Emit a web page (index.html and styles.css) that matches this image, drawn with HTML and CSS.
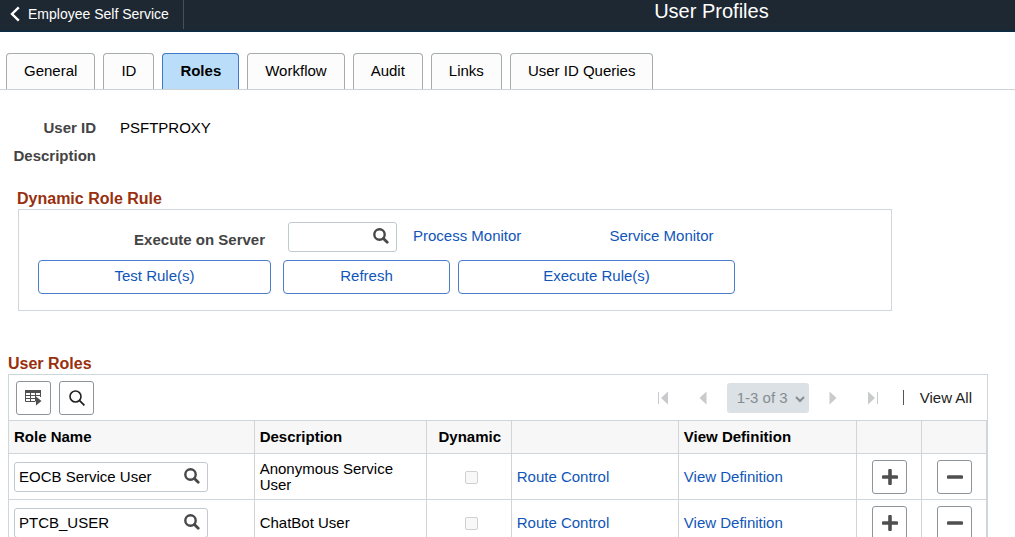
FILE: index.html
```html
<!DOCTYPE html>
<html lang="en">
<head>
<meta charset="utf-8">
<meta name="viewport" content="width=device-width, initial-scale=1">
<title>User Profiles</title>
<link rel="stylesheet" href="styles.css">
</head>
<body>
<svg class="symbols" aria-hidden="true">
  <symbol id="lookup" viewBox="0 0 16 16">
    <circle cx="6.5" cy="6.5" r="5.2" fill="none" stroke="currentColor" stroke-width="2.4"/>
    <path d="M10.4 10.4 14.2 14.2" stroke="currentColor" stroke-width="2.8" stroke-linecap="round"/>
  </symbol>
  <symbol id="plus" viewBox="0 0 16 16">
    <path d="M1.5 8h13M8 1.500v13" stroke="currentColor" stroke-width="3.6" stroke-linecap="round"/>
  </symbol>
  <symbol id="minus" viewBox="0 0 16 16">
    <path d="M1.5 8h13" stroke="currentColor" stroke-width="3.6" stroke-linecap="round"/>
  </symbol>
</svg>

<header class="banner">
  <a class="back" href="#">
    <svg class="back-icon" viewBox="0 0 10 16" aria-hidden="true"><path d="M8.8 1.3 2 8l6.8 6.7" fill="none" stroke="currentColor" stroke-width="2.4"/></svg>
    Employee Self Service
  </a>
  <h1 class="title">User Profiles</h1>
</header>

<nav class="tabs" aria-label="Profile pages">
  <a class="tab" href="#">General</a>
  <a class="tab" href="#">ID</a>
  <a class="tab tab-current" href="#" aria-current="page">Roles</a>
  <a class="tab" href="#">Workflow</a>
  <a class="tab" href="#">Audit</a>
  <a class="tab" href="#">Links</a>
  <a class="tab" href="#">User ID Queries</a>
</nav>

<main>
  <dl class="facts">
    <dt>User ID</dt><dd>PSFTPROXY</dd>
    <dt>Description</dt><dd></dd>
  </dl>

  <section class="rule">
    <h2 class="heading">Dynamic Role Rule</h2>
    <div class="rule-box">
      <div class="rule-row">
        <label class="server-label" for="server">Execute on Server</label>
        <div class="lookup lookup-server">
          <input id="server" type="text">
          <button type="button" aria-label="Look up server"><svg class="icon" aria-hidden="true"><use href="#lookup"/></svg></button>
        </div>
        <a class="process" href="#">Process Monitor</a>
        <a class="service" href="#">Service Monitor</a>
      </div>
      <div class="rule-actions">
        <button class="action" type="button">Test Rule(s)</button>
        <button class="action action-refresh" type="button">Refresh</button>
        <button class="action" type="button">Execute Rule(s)</button>
      </div>
    </div>
  </section>

  <section class="roles">
    <h2 class="heading">User Roles</h2>
    <div class="grid-box">
      <div class="toolbar">
        <button class="square" type="button" aria-label="Grid actions">
          <svg class="grid-icon" viewBox="0 0 17 17" aria-hidden="true">
            <path d="M0 1h16v3H0z" fill="currentColor"/>
            <path d="M.5 3v9.5H10M.5 6.5h15M.5 9.5H11M5.5 3v9.5M10.5 3v9.5M15.5 3v5" fill="none" stroke="currentColor"/>
            <path d="M11 7.5 16.5 12 11 16.5z" fill="currentColor"/>
          </svg>
        </button>
        <button class="square" type="button" aria-label="Find in grid">
          <svg class="find-icon" viewBox="0 0 16 16" aria-hidden="true"><circle cx="6.5" cy="6.5" r="5.5" fill="none" stroke="currentColor" stroke-width="1.6"/><path d="m10.4 10.4 5 5" stroke="currentColor" stroke-width="1.8"/></svg>
        </button>
        <div class="pager">
          <button type="button" disabled aria-label="First"><svg viewBox="0 0 12 14" aria-hidden="true"><path d="M1 1h1v12H1zM11 .5v13L4 7z" fill="currentColor"/></svg></button>
          <button type="button" disabled aria-label="Previous"><svg viewBox="0 0 12 14" aria-hidden="true"><path d="M9.5 .5v13L2.5 7z" fill="currentColor"/></svg></button>
          <div class="range">
            <select aria-label="Rows shown" disabled><option>1-3 of 3</option></select>
            <svg class="range-icon" viewBox="0 0 10 7" aria-hidden="true"><path d="m1 1 4 4 4-4" fill="none" stroke="currentColor" stroke-width="2"/></svg>
          </div>
          <button type="button" disabled aria-label="Next"><svg viewBox="0 0 12 14" aria-hidden="true"><path d="M2.5 .5v13L9.5 7z" fill="currentColor"/></svg></button>
          <button type="button" disabled aria-label="Last"><svg viewBox="0 0 12 14" aria-hidden="true"><path d="M10 1h1v12h-1zM1 .5v13L8 7z" fill="currentColor"/></svg></button>
        </div>
        <a class="view-all" href="#">View All</a>
      </div>
      <table class="grid">
        <colgroup><col class="c-name"><col class="c-desc"><col class="c-dyn"><col class="c-route"><col class="c-def"><col class="c-btn"><col class="c-btn"></colgroup>
        <thead>
          <tr><th scope="col">Role Name</th><th scope="col">Description</th><th class="mid" scope="col">Dynamic</th><th></th><th scope="col">View Definition</th><th></th><th></th></tr>
        </thead>
        <tbody>
          <tr>
            <td><div class="lookup"><input type="text" aria-label="Role name 1" value="EOCB Service User"><button type="button" aria-label="Look up role 1"><svg class="icon" aria-hidden="true"><use href="#lookup"/></svg></button></div></td>
            <td>Anonymous Service User</td>
            <td class="mid"><input class="tick" type="checkbox" disabled aria-label="Dynamic, row 1"></td>
            <td><a href="#">Route Control</a></td>
            <td><a href="#">View Definition</a></td>
            <td class="mid"><button class="square" type="button" aria-label="Add row after 1"><svg class="icon" aria-hidden="true"><use href="#plus"/></svg></button></td>
            <td class="mid"><button class="square" type="button" aria-label="Delete row 1"><svg class="icon" aria-hidden="true"><use href="#minus"/></svg></button></td>
          </tr>
          <tr>
            <td><div class="lookup"><input type="text" aria-label="Role name 2" value="PTCB_USER"><button type="button" aria-label="Look up role 2"><svg class="icon" aria-hidden="true"><use href="#lookup"/></svg></button></div></td>
            <td>ChatBot User</td>
            <td class="mid"><input class="tick" type="checkbox" disabled aria-label="Dynamic, row 2"></td>
            <td><a href="#">Route Control</a></td>
            <td><a href="#">View Definition</a></td>
            <td class="mid"><button class="square" type="button" aria-label="Add row after 2"><svg class="icon" aria-hidden="true"><use href="#plus"/></svg></button></td>
            <td class="mid"><button class="square" type="button" aria-label="Delete row 2"><svg class="icon" aria-hidden="true"><use href="#minus"/></svg></button></td>
          </tr>
        </tbody>
      </table>
    </div>
  </section>
</main>
</body>
</html>
```

FILE: styles.css
```css
* { box-sizing: border-box; }

html { scrollbar-width: none; }

body {
  margin: 0;
  background: #fff;
  color: #000;
  font: 15px/16px "Liberation Sans", Arial, sans-serif;
}

h1, h2, dl, dd { margin: 0; }
a { color: #0f56b8; text-decoration: none; }
button, input, select { font: inherit; color: inherit; margin: 0; }
button { cursor: pointer; }
svg { display: block; }

.symbols { position: absolute; width: 0; height: 0; }
.icon { width: 16px; height: 16px; }

.banner {
  display: flex;
  align-items: flex-start;
  height: 32px;
  background: #1e2832;
  border-bottom: 2px solid #0f2b42;
  color: #fff;
}
.back {
  display: flex;
  align-items: center;
  gap: 8px;
  height: 29px;
  padding: 0 14px 2px 10px;
  border-right: 1px solid #46505a;
  color: #fff;
  font-size: 14px;
  white-space: nowrap;
}
.back-icon { width: 10px; height: 16px; }
.title {
  flex: 1;
  padding-left: 224px;
  font-size: 20px;
  line-height: 22px;
  font-weight: 400;
  text-align: center;
}

.tabs {
  display: flex;
  gap: 8px;
  margin-top: 21px;
  padding: 0 6px;
  border-bottom: 1px solid #ccd2d6;
}
.tab {
  padding: 9px 17px 10px;
  border: 1px solid #a6abae;
  border-bottom: 0;
  border-radius: 4px 4px 0 0;
  background: #fcfcfc;
  color: #000;
  white-space: nowrap;
}
.tab-current {
  background: #badefa;
  border-color: #3f78c8;
  font-weight: 700;
}

.facts {
  display: grid;
  grid-template-columns: 88px 1fr;
  gap: 12px 24px;
  padding: 30px 8px 0;
}
.facts dt {
  color: #444;
  font-weight: 700;
  text-align: right;
}

.heading {
  color: #982f0e;
  font-size: 16px;
  line-height: 20px;
  font-weight: 700;
}

.rule {
  max-width: 892px;
  margin-top: 25px;
  padding-left: 17px;
}
.rule-box {
  margin: 0 0 0 1px;
  padding: 12px 19px 16px;
  border: 1px solid #ced7dc;
}
.rule-row { display: flex; }
.server-label {
  width: 227px;
  padding-top: 10px;
  color: #444;
  font-weight: 700;
  text-align: right;
}
.process { padding: 6px 0 0 16px; }
.service { padding: 6px 0 0 88px; }

.lookup {
  display: flex;
  align-items: center;
  width: 194px;
  height: 30px;
  border: 1px solid #c0c8d0;
  border-radius: 3px;
  background: #fff;
}
.lookup-server { width: 109px; margin-left: 23px; }
.lookup input {
  flex: 1;
  min-width: 0;
  padding: 0 4px;
  border: 0;
  outline: 0;
  background: none;
}
.lookup button {
  padding: 0 7px 2px 0;
  border: 0;
  background: none;
  color: #484848;
}

.rule-actions {
  display: grid;
  grid-template-columns: 233fr 171fr 277fr;
  gap: 12px 8px;
  max-width: 697px;
  margin-top: 8px;
}
.action {
  height: 34px;
  padding: 0 8px 2px;
  border: 1px solid #4a7dcb;
  border-radius: 4px;
  background: #fff;
  color: #0f56b8;
}
.action-refresh { margin-left: 4px; }

.roles {
  max-width: 988px;
  margin-top: 43px;
  padding-left: 8px;
}
.grid-box { border: 1px solid #ced7dc; }

.toolbar {
  display: flex;
  align-items: center;
  height: 45px;
  padding: 0 15px 0 7px;
  gap: 8px;
}
.square {
  display: inline-flex;
  align-items: center;
  justify-content: center;
  width: 35px;
  height: 34px;
  padding: 0;
  border: 1px solid #8d959b;
  border-radius: 3px;
  background: #fff;
  color: #4f4f4f;
  vertical-align: middle;
}
.grid-icon { width: 17px; height: 17px; }
.find-icon { width: 16px; height: 16px; color: #222; }

.pager {
  display: flex;
  align-items: center;
  margin-left: auto;
  margin-right: 2px;
}
.pager button {
  padding: 0 14px;
  border: 0;
  background: none;
  color: #c8cacb;
}
.pager button svg { width: 12px; height: 14px; }
.range { position: relative; margin: 0 4px; }
.range select {
  appearance: none;
  width: 82px;
  height: 30px;
  padding: 0 10px;
  border: 0;
  border-radius: 3px;
  background: #dbe1e4;
  color: #858d92;
  opacity: 1;
}
.range-icon {
  position: absolute;
  top: 13px;
  right: 4px;
  width: 10px;
  height: 7px;
  color: #858d92;
  pointer-events: none;
}
.view-all {
  display: flex;
  align-items: center;
  gap: 16px;
  color: #222;
}
.view-all::before {
  content: "";
  width: 1px;
  height: 15px;
  background: #555;
}

.grid {
  width: 100%;
  border-collapse: collapse;
  table-layout: fixed;
}
.c-name { width: 245px; }
.c-desc { width: 172px; }
.c-dyn { width: 85px; }
.c-route { width: 167px; }
.c-def { width: 178px; }
.c-btn { width: 65px; }
.grid th, .grid td {
  padding: 0 5px;
  border: 1px solid #ced5db;
  text-align: left;
  vertical-align: middle;
}
.grid th:first-child, .grid td:first-child { border-left: 0; }
.grid th { height: 33px; background: #f7f7f7; }
.grid td { height: 46px; }
.grid .mid { padding: 0 4px 0 6px; text-align: center; }
.grid td:nth-child(2) { padding-right: 20px; }

.tick {
  appearance: none;
  display: inline-block;
  width: 13px;
  height: 13px;
  margin-left: 4px;
  border: 1px solid #d0d0d0;
  border-radius: 2px;
  background: #f8f8f8;
  vertical-align: middle;
}
```
